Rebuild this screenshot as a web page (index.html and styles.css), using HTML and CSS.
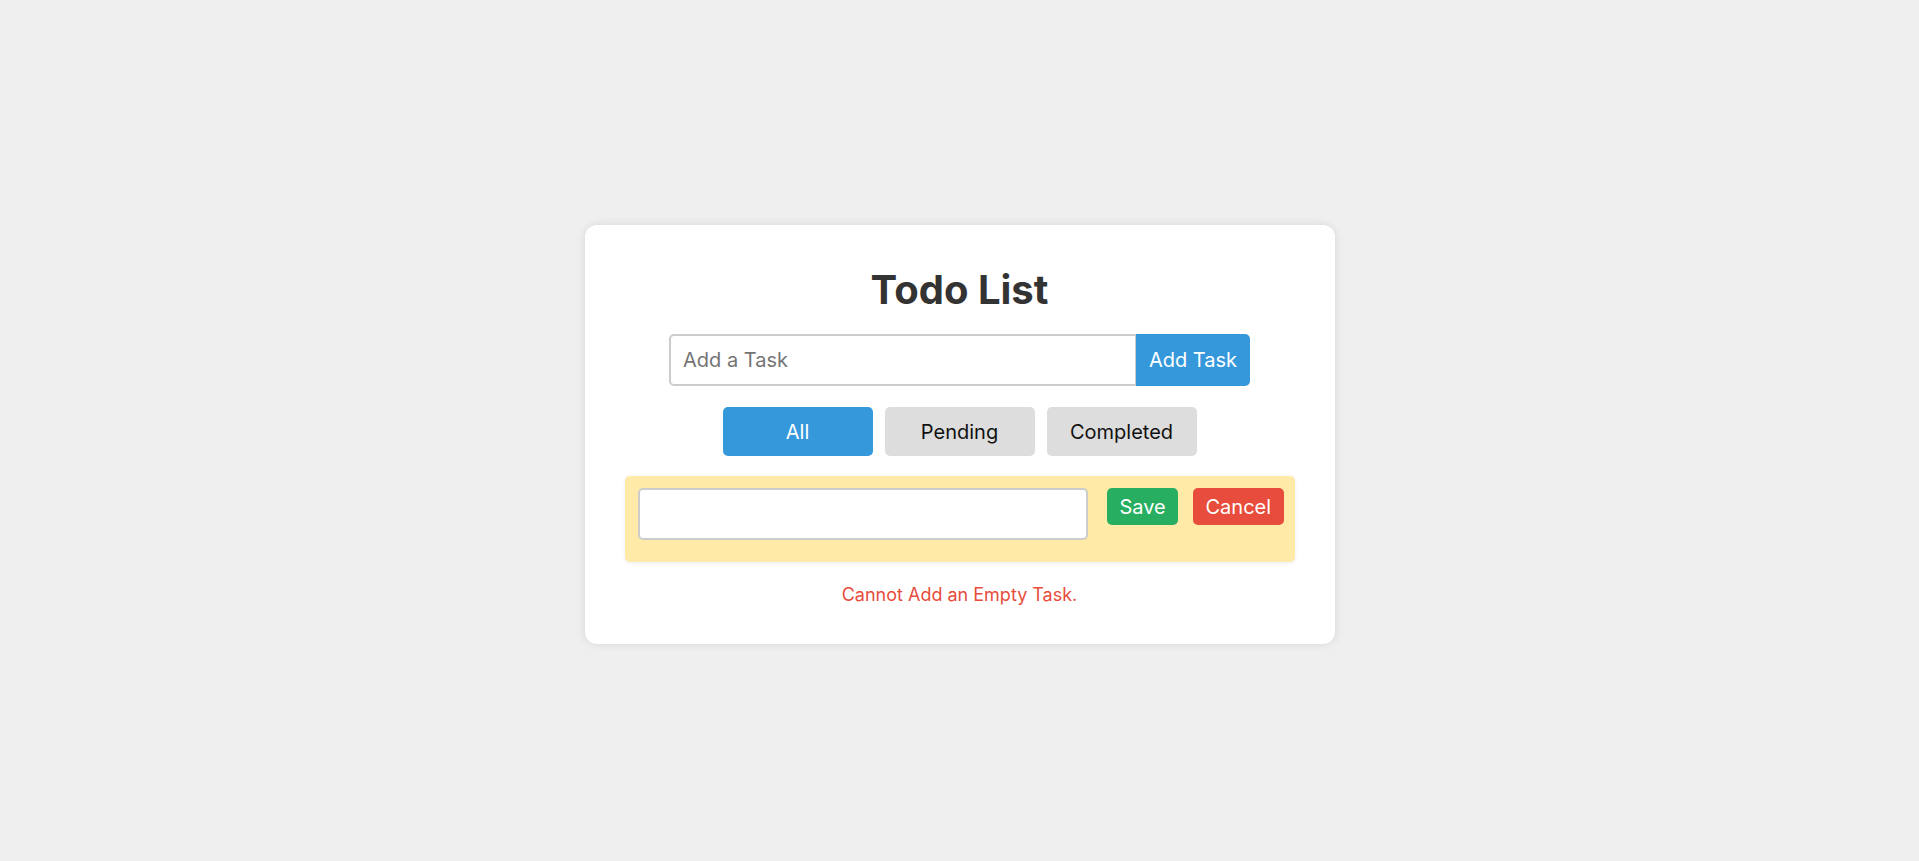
FILE: index.html
```html
<!DOCTYPE html>
<html lang="en">
<head>
<meta charset="utf-8">
<title>Todo List</title>
<link rel="stylesheet" href="styles.css">
</head>
<body>
<main class="card">
  <h1 class="title">Todo List</h1>
  <div class="add-row">
    <input class="add-input" type="text" placeholder="Add a Task">
    <button class="add-btn">Add Task</button>
  </div>
  <div class="filters">
    <button class="filter active">All</button>
    <button class="filter">Pending</button>
    <button class="filter">Completed</button>
  </div>
  <ul class="tasks">
    <li class="task editing">
      <input class="edit-input" type="text">
      <button class="btn save">Save</button>
      <button class="btn cancel">Cancel</button>
    </li>
  </ul>
  <p class="error">Cannot Add an Empty Task.</p>
</main>
</body>
</html>
```
FILE: styles.css
```css
* { box-sizing: border-box; }
html, body { margin: 0; }
body {
  height: 100vh;
  padding-top: 8px;
  background: #efefef;
  font-family: Inter, "Noto Sans", sans-serif;
  display: flex;
  justify-content: center;
  align-items: center;
}
.card {
  width: 750px;
  background: #fff;
  border-radius: 12px;
  box-shadow: 0 0 10px rgba(0,0,0,0.1);
  padding: 41px 40px 37px;
  display: flex;
  flex-direction: column;
  align-items: center;
}
.title {
  margin: 0 0 20px;
  font-size: 40px;
  line-height: 48px;
  font-weight: 700;
  color: #333;
}
.add-row {
  display: flex;
  height: 52px;
  margin-bottom: 21px;
}
.add-input {
  width: 467px;
  height: 52px;
  border: 2px solid #ccc;
  border-right-width: 1px;
  border-radius: 5px 0 0 5px;
  padding: 0 12px;
  font-family: inherit;
  font-size: 20px;
  color: #333;
  outline: none;
}
.add-input::placeholder { color: #757575; }
.add-btn {
  width: 114px;
  height: 52px;
  border: none;
  border-radius: 0 5px 5px 0;
  background: #3498db;
  color: #fff;
  font-family: inherit;
  font-size: 20px;
  padding: 0;
}
.filters {
  display: flex;
  gap: 12px;
  margin-bottom: 20px;
}
.filter {
  width: 150px;
  height: 49px;
  border: none;
  border-radius: 5px;
  background: #ddd;
  color: #111;
  font-family: inherit;
  font-size: 20px;
  padding: 0;
}
.filter.active { background: #3498db; color: #fff; }
.tasks {
  list-style: none;
  margin: 0;
  padding: 0;
  width: 670px;
}
.task {
  display: flex;
  align-items: flex-start;
  padding: 12px 11px 22px 13px;
  border-radius: 5px;
  background: #ffeaa7;
  box-shadow: 0 1px 4px rgba(0,0,0,0.08);
}
.edit-input {
  width: 450px;
  height: 52px;
  border: 2px solid #ccc;
  border-radius: 5px;
  padding: 0 12px;
  font-family: inherit;
  font-size: 18px;
  margin-right: 19px;
  outline: none;
}
.btn {
  height: 37px;
  border: none;
  border-radius: 5px;
  color: #fff;
  font-family: inherit;
  font-size: 20px;
  padding: 0 13px;
}
.save { background: #27ae60; width: 71px; margin-right: 15px; }
.cancel { background: #e74c3c; width: 91px; }
.error {
  margin: 21px 0 0;
  color: #e74c3c;
  font-size: 18px;
  line-height: 24px;
}
```
